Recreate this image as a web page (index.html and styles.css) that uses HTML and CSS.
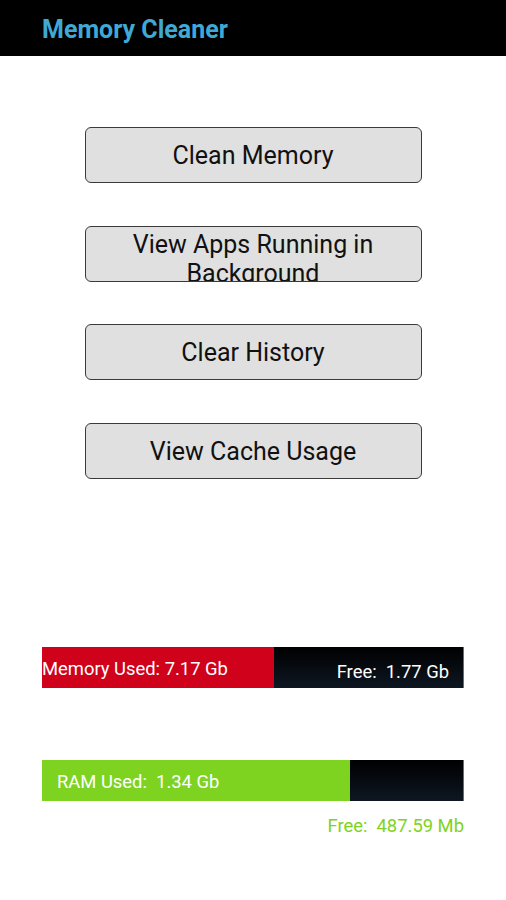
FILE: index.html
```html
<!DOCTYPE html>
<html lang="en">
<head>
    <meta charset="UTF-8">
    <meta name="viewport" content="width=device-width, initial-scale=1.0">
    <title>Memory Cleaner</title>
    <link rel="stylesheet" href="styles.css">
</head>
<body>

    <header class="app-bar">
        Memory Cleaner
    </header>

    <div class="menu">
        <button class="menu-button">Clean Memory</button>
        <button class="menu-button">View Apps Running in Background</button>
        <button class="menu-button">Clear History</button>
        <button class="menu-button">View Cache Usage</button>
    </div>

    <!-- Memoria interna -->
    <div class="usage">
        <div class="bar">
            <div class="bar-used memory" style="width: 232px;">
                <span class="used-label">Memory Used: 7.17 Gb</span>
            </div>
            <div class="bar-free">
                <span class="free-label">Free:&nbsp; 1.77 Gb</span>
            </div>
        </div>
    </div>

    <!-- RAM -->
    <div class="usage ram-usage">
        <div class="bar">
            <div class="bar-used ram" style="width: 308px;">
                <span class="used-label ram-label">RAM Used:&nbsp; 1.34 Gb</span>
            </div>
            <div class="bar-free"></div>
        </div>
        <div class="ram-free">Free:&nbsp; 487.59 Mb</div>
    </div>

</body>
</html>
```

FILE: styles.css
```css
:root {
    --barra: #000000;
    --titulo: #3fa9d6;
    --boton: #e0e0e0;
    --rojo: #d0021b;
    --verde: #7ed321;
}

body {
    font-family: Roboto, "Noto Sans", Arial, sans-serif;
    background-color: #ffffff;
    margin: 0;
    padding: 0;
}

.app-bar {
    background-color: var(--barra);
    color: var(--titulo);
    height: 56px;
    line-height: 59px;
    padding-left: 42px;
    font-size: 25px;
    font-weight: bold;
}

/* Botones */
.menu {
    display: flex;
    flex-direction: column;
    align-items: center;
    gap: 42.5px;
    padding-top: 71px;
}

.menu-button {
    width: 337px;
    height: 56px;
    background-color: var(--boton);
    border: 1px solid #3a3a3a;
    border-radius: 6px;
    font-family: Roboto, "Noto Sans", Arial, sans-serif;
    font-size: 25px;
    color: #111111;
    line-height: 29px;
    padding: 0 30px;
    overflow: hidden;
    display: flex;
    align-items: flex-start;
    justify-content: center;
    padding-top: 13px;
}

.menu-button:nth-child(2) {
    padding-top: 3px;
}

/* Barras de uso */
.usage {
    margin: 168px 42px 0 42px;
}

.ram-usage {
    margin-top: 72px;
}

.bar {
    display: flex;
    height: 41px;
}

.bar-used {
    display: flex;
    align-items: center;
    color: #ffffff;
    font-size: 18.4px;
}

.memory {
    background-color: var(--rojo);
}

.ram {
    background-color: var(--verde);
}

.used-label {
    padding-top: 2px;
}

.ram-label {
    padding-left: 15px;
}

.bar-free {
    flex: 1;
    display: flex;
    align-items: center;
    justify-content: flex-end;
    background: linear-gradient(to bottom, #000000, #0e1722);
    border-right: 1px solid #666c73;
    color: #ffffff;
    font-size: 18.4px;
}

.free-label {
    padding-right: 14px;
    padding-top: 8px;
}

.ram-free {
    text-align: right;
    color: var(--verde);
    font-size: 18.4px;
    margin-top: 14px;
}
```
